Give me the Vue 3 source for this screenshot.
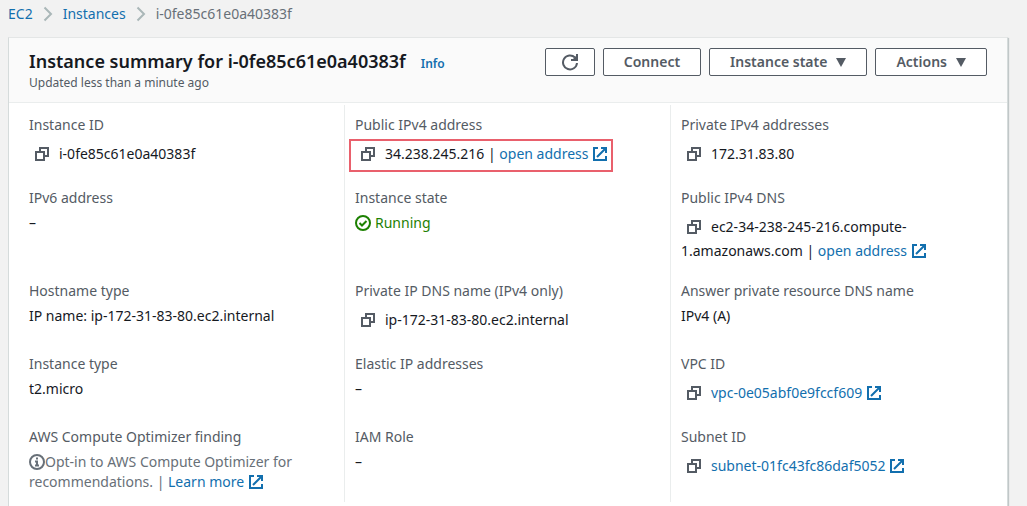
<script setup>
import { h } from 'vue'

const CopyIcon = () =>
  h('svg', { viewBox: '0 0 16 16', width: 16, height: 16, fill: 'none', stroke: 'currentColor', 'stroke-width': 2, 'aria-hidden': 'true' }, [
    h('path', { d: 'M2 6h8v8H2z' }),
    h('path', { d: 'M6 6V2h8v8h-4' })
  ])

const ExternalIcon = () =>
  h('svg', { viewBox: '0 0 16 16', width: 16, height: 16, fill: 'none', stroke: 'currentColor', 'stroke-width': 2, 'aria-hidden': 'true' }, [
    h('path', { d: 'M6 2H2v12h12v-4' }),
    h('path', { d: 'M9 2h5v5M14 2L5 11' })
  ])

const columns = [
  [
    { label: 'Instance ID', copy: true, text: 'i-0fe85c61e0a40383f' },
    { label: 'IPv6 address', text: '–' },
    { label: 'Hostname type', text: 'IP name: ip-172-31-83-80.ec2.internal' },
    { label: 'Instance type', text: 't2.micro' },
    { label: 'AWS Compute Optimizer finding', info: true, text: 'Opt-in to AWS Compute Optimizer for recommendations.', link: 'Learn more' }
  ],
  [
    { label: 'Public IPv4 address', copy: true, marked: true, text: '34.238.245.216', link: 'open address' },
    { label: 'Instance state', status: true, text: 'Running' },
    { label: 'Private IP DNS name (IPv4 only)', copy: true, text: 'ip-172-31-83-80.ec2.internal' },
    { label: 'Elastic IP addresses', text: '–' },
    { label: 'IAM Role', text: '–' }
  ],
  [
    { label: 'Private IPv4 addresses', copy: true, text: '172.31.83.80' },
    { label: 'Public IPv4 DNS', copy: true, text: 'ec2-34-238-245-216.compute-1.amazonaws.com', link: 'open address' },
    { label: 'Answer private resource DNS name', text: 'IPv4 (A)' },
    { label: 'VPC ID', copy: true, link: 'vpc-0e05abf0e9fccf609' },
    { label: 'Subnet ID', copy: true, link: 'subnet-01fc43fc86daf5052' }
  ]
]
</script>

<template>
  <div class="page">
    <nav class="crumbs" aria-label="Breadcrumb">
      <a href="#">EC2</a>
      <svg class="chevron" viewBox="0 0 10 16" aria-hidden="true"><path d="M1.500 1.500L8 8l-6.500 6.500" /></svg>
      <a href="#">Instances</a>
      <svg class="chevron" viewBox="0 0 10 16" aria-hidden="true"><path d="M1.500 1.500L8 8l-6.500 6.500" /></svg>
      <span>i-0fe85c61e0a40383f</span>
    </nav>

    <main class="card">
      <header class="head">
        <div class="titles">
          <div class="title-line">
            <h1>Instance summary for i-0fe85c61e0a40383f</h1>
            <a class="info-link" href="#">Info</a>
          </div>
          <p>Updated less than a minute ago</p>
        </div>
        <div class="actions">
          <button type="button" class="refresh" aria-label="Refresh">
            <svg viewBox="0 0 18 18" width="18" height="18" fill="none" stroke="currentColor" stroke-width="2" aria-hidden="true">
              <path d="M16 10A7 7 0 1 1 14 4.500" />
              <path d="M16 1v6h-6" />
              <path d="M16 2v5h-5z" fill="currentColor" stroke="none" />
            </svg>
          </button>
          <button type="button">Connect</button>
          <button type="button">Instance state<svg class="caret" viewBox="0 0 10 9" aria-hidden="true"><path d="M0 0h10L5 9z" /></svg></button>
          <button type="button">Actions<svg class="caret" viewBox="0 0 10 9" aria-hidden="true"><path d="M0 0h10L5 9z" /></svg></button>
        </div>
      </header>

      <div class="details">
        <dl v-for="(fields, c) in columns" :key="c" class="column">
          <div v-for="f in fields" :key="f.label" class="field">
            <dt>{{ f.label }}</dt>
            <dd :class="{ copyable: f.copy, status: f.status, muted: f.info }">
              <span :class="{ marked: f.marked }"><button v-if="f.copy" type="button" class="copy" :aria-label="'Copy ' + f.label"><CopyIcon /></button><svg v-if="f.status" class="state-icon" viewBox="0 0 16 16" aria-hidden="true"><circle cx="8" cy="8" r="7" /><path d="M4.500 8l2.500 2.500 4.500-4.500" /></svg><svg v-if="f.info" class="info-icon" viewBox="0 0 16 16" aria-hidden="true"><circle cx="8" cy="8" r="7" /><path d="M7 4.500h2M6 7.500h2v4M6 11.500h4" /></svg>{{ f.text }}<template v-if="f.text && f.link"> | </template><a v-if="f.link" href="#">{{ f.link }} <ExternalIcon class="external" /></a></span>
            </dd>
          </div>
        </dl>
      </div>
    </main>
  </div>
</template>

<style>
body {
  margin: 0;
  background: #f2f2f2;
  overflow: hidden;
}
</style>

<style scoped>
.page {
  box-sizing: border-box;
  min-height: 100vh;
  display: flex;
  flex-direction: column;
  padding: 4px 19px 0 8px;
  font: 14px/20px "Noto Sans", "Open Sans", sans-serif;
  color: #16191f;
}
a {
  color: #126fae;
  text-decoration: none;
}
.crumbs {
  display: flex;
  align-items: center;
  gap: 10px;
  color: #687078;
}
.chevron {
  width: 10px;
  height: 16px;
  fill: none;
  stroke: #aab7b8;
  stroke-width: 2;
}
.card {
  flex: 1;
  margin-top: 13px;
  background: #fff;
  border: 1px solid #d5dbdb;
  border-top-color: #e4e6e6;
  border-bottom: 0;
  box-shadow: 1px 1px 1px rgba(0, 28, 36, 0.2);
}
.head {
  display: flex;
  justify-content: space-between;
  align-items: flex-start;
  padding: 10px 20px;
  background: #fafafa;
  border-bottom: 1px solid #eaeded;
}
.titles {
  padding-top: 2px;
}
.title-line {
  display: flex;
  align-items: baseline;
  gap: 15px;
}
h1 {
  margin: 0;
  font-size: 18px;
  line-height: 22px;
  font-weight: 600;
}
.info-link {
  font-size: 12px;
  line-height: 20px;
  font-weight: 600;
}
.titles p {
  margin: 0;
  font-size: 12px;
  line-height: 18px;
  color: #545b64;
}
.actions {
  display: flex;
  gap: 8px;
}
.actions button {
  display: flex;
  align-items: center;
  height: 28px;
  padding: 0 20px;
  font: 600 14px/20px "Noto Sans", "Open Sans", sans-serif;
  color: #545b64;
  background: #fff;
  border: 1px solid #545b64;
  border-radius: 2px;
  white-space: nowrap;
}
.actions .refresh {
  padding: 0 15px;
}
.caret {
  width: 10px;
  height: 9px;
  margin-left: 9px;
  fill: currentColor;
}
.details {
  display: grid;
  grid-template-columns: repeat(3, 1fr);
  grid-template-rows: repeat(5, auto);
  row-gap: 18px;
  margin: 2px 11px 0 9px;
}
.column {
  display: grid;
  grid-row: span 5;
  grid-template-rows: subgrid;
  margin: 0;
  padding: 10px;
  border-left: 1px solid #eaeded;
}
.column:first-child {
  border-left-color: transparent;
}
.field {
  min-height: 55px;
}
dt {
  color: #545b64;
}
dd {
  margin: 5px 0 0;
}
.copyable {
  margin-top: 7px;
  line-height: 24px;
}
.status {
  color: #1d8102;
}
.muted {
  color: #687078;
}
.copy {
  padding: 0;
  margin: 0 9px 0 5px;
  border: 0;
  background: none;
  color: #545b64;
  vertical-align: -3px;
}
.copy svg {
  display: block;
}
.external,
.state-icon,
.info-icon {
  width: 16px;
  height: 16px;
  vertical-align: -3px;
}
.state-icon,
.info-icon {
  fill: none;
  stroke: currentColor;
  stroke-width: 2;
}
.state-icon {
  margin-right: 4px;
}
.marked {
  position: relative;
  display: inline-block;
}
.marked::after {
  content: "";
  position: absolute;
  inset: -3px -5px -6px -6px;
  border: 2px solid #e9606c;
  pointer-events: none;
}
</style>
